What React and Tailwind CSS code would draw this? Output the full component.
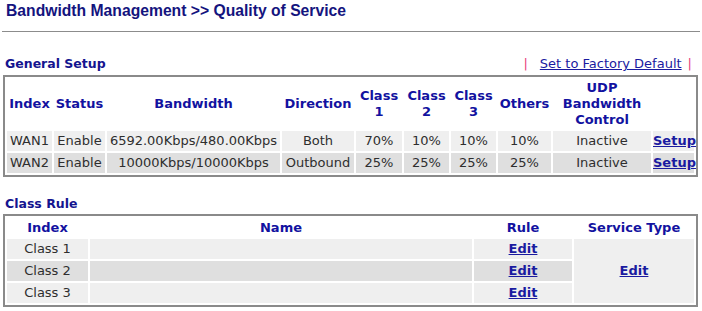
import React from "react";

const head = "text-[#1212a0] font-bold";
const cellA = "bg-[#efefef]";
const cellB = "bg-[#dfdfdf]";

const wanRows = [
  { index: "WAN1", status: "Enable", bw: "6592.00Kbps/480.00Kbps", dir: "Both", c1: "70%", c2: "10%", c3: "10%", others: "10%", udp: "Inactive", bg: cellA },
  { index: "WAN2", status: "Enable", bw: "10000Kbps/10000Kbps", dir: "Outbound", c1: "25%", c2: "25%", c3: "25%", others: "25%", udp: "Inactive", bg: cellB },
];

const classRows = [
  { name: "Class 1", bg: cellA },
  { name: "Class 2", bg: cellB },
  { name: "Class 3", bg: cellA },
];

const App = () => {
  return (
    <div className="w-[702px] h-[311px] bg-white overflow-hidden font-['DejaVu_Sans',sans-serif] text-[13px] text-[#2e2e2e]">
      <div className="pl-[6px] h-[22px] leading-[22px] font-['Liberation_Sans',Arial,sans-serif] font-bold text-[15.7px] text-[#14147e]">
        Bandwidth Management &gt;&gt; Quality of Service
      </div>
      <div className="mt-[9px] mx-[2px] border-t border-[#8c8c8c]" />

      <div className="mt-[22px] h-[20px] flex items-center justify-between pl-[5px] pr-[10px]">
        <span className="text-[#14148f] font-bold text-[12.5px]">General Setup</span>
        <span className="flex items-center">
          <span className="text-[#e8407a] mr-[12px]">|</span>
          <a className="text-[#1a1aa0] underline">Set to Factory Default</a>
          <span className="text-[#e8407a] ml-[6px]">|</span>
        </span>
      </div>

      <table className="ml-[3px] mt-[1px] w-[695px] table-fixed border-separate border-spacing-[2px] border-2 border-[#8a8a8a] text-center leading-[16px]">
        <thead>
          <tr className="h-[50px]">
            <th className={`w-[45px] p-0 ${head}`}>Index</th>
            <th className={`w-[51px] p-0 ${head}`}>Status</th>
            <th className={`w-[173px] p-0 ${head}`}>Bandwidth</th>
            <th className={`w-[72px] p-0 ${head}`}>Direction</th>
            <th className={`w-[46px] p-0 ${head}`}>Class<br />1</th>
            <th className={`w-[45px] p-0 ${head}`}>Class<br />2</th>
            <th className={`w-[45px] p-0 ${head}`}>Class<br />3</th>
            <th className={`w-[53px] p-0 ${head}`}>Others</th>
            <th className={`w-[98px] p-0 ${head}`}>UDP<br />Bandwidth<br />Control</th>
            <th className="w-[41px] p-0"></th>
          </tr>
        </thead>
        <tbody>
          {wanRows.map((r) => (
            <tr key={r.index} className="h-[20px]">
              <td className={`p-0 ${r.bg}`}>{r.index}</td>
              <td className={`p-0 ${r.bg}`}>{r.status}</td>
              <td className={`p-0 ${r.bg}`}>{r.bw}</td>
              <td className={`p-0 ${r.bg}`}>{r.dir}</td>
              <td className={`p-0 ${r.bg}`}>{r.c1}</td>
              <td className={`p-0 ${r.bg}`}>{r.c2}</td>
              <td className={`p-0 ${r.bg}`}>{r.c3}</td>
              <td className={`p-0 ${r.bg}`}>{r.others}</td>
              <td className={`p-0 ${r.bg}`}>{r.udp}</td>
              <td className={`p-0 ${r.bg}`}>
                <a className="text-[#1a1aa0] font-bold underline">Setup</a>
              </td>
            </tr>
          ))}
        </tbody>
      </table>

      <div className="mt-[17px] h-[20px] flex items-center pl-[5px]">
        <span className="text-[#14148f] font-bold text-[12.5px]">Class Rule</span>
      </div>

      <table className="ml-[3px] w-[695px] table-fixed border-separate border-spacing-[2px] border-2 border-[#8a8a8a] text-center leading-[16px]">
        <thead>
          <tr className="h-[19px]">
            <th className={`w-[81px] p-0 ${head}`}>Index</th>
            <th className={`w-[382px] p-0 ${head}`}>Name</th>
            <th className={`w-[98px] p-0 ${head}`}>Rule</th>
            <th className={`w-[120px] p-0 ${head}`}>Service Type</th>
          </tr>
        </thead>
        <tbody>
          {classRows.map((r, i) => (
            <tr key={r.name} className="h-[20px]">
              <td className={`p-0 ${r.bg}`}>{r.name}</td>
              <td className={`p-0 ${r.bg}`}></td>
              <td className={`p-0 ${r.bg}`}>
                <a className="text-[#1a1aa0] font-bold underline">Edit</a>
              </td>
              {i === 0 && (
                <td rowSpan={3} className={`p-0 ${cellA}`}>
                  <a className="text-[#1a1aa0] font-bold underline">Edit</a>
                </td>
              )}
            </tr>
          ))}
        </tbody>
      </table>
    </div>
  );
};

export default App;
